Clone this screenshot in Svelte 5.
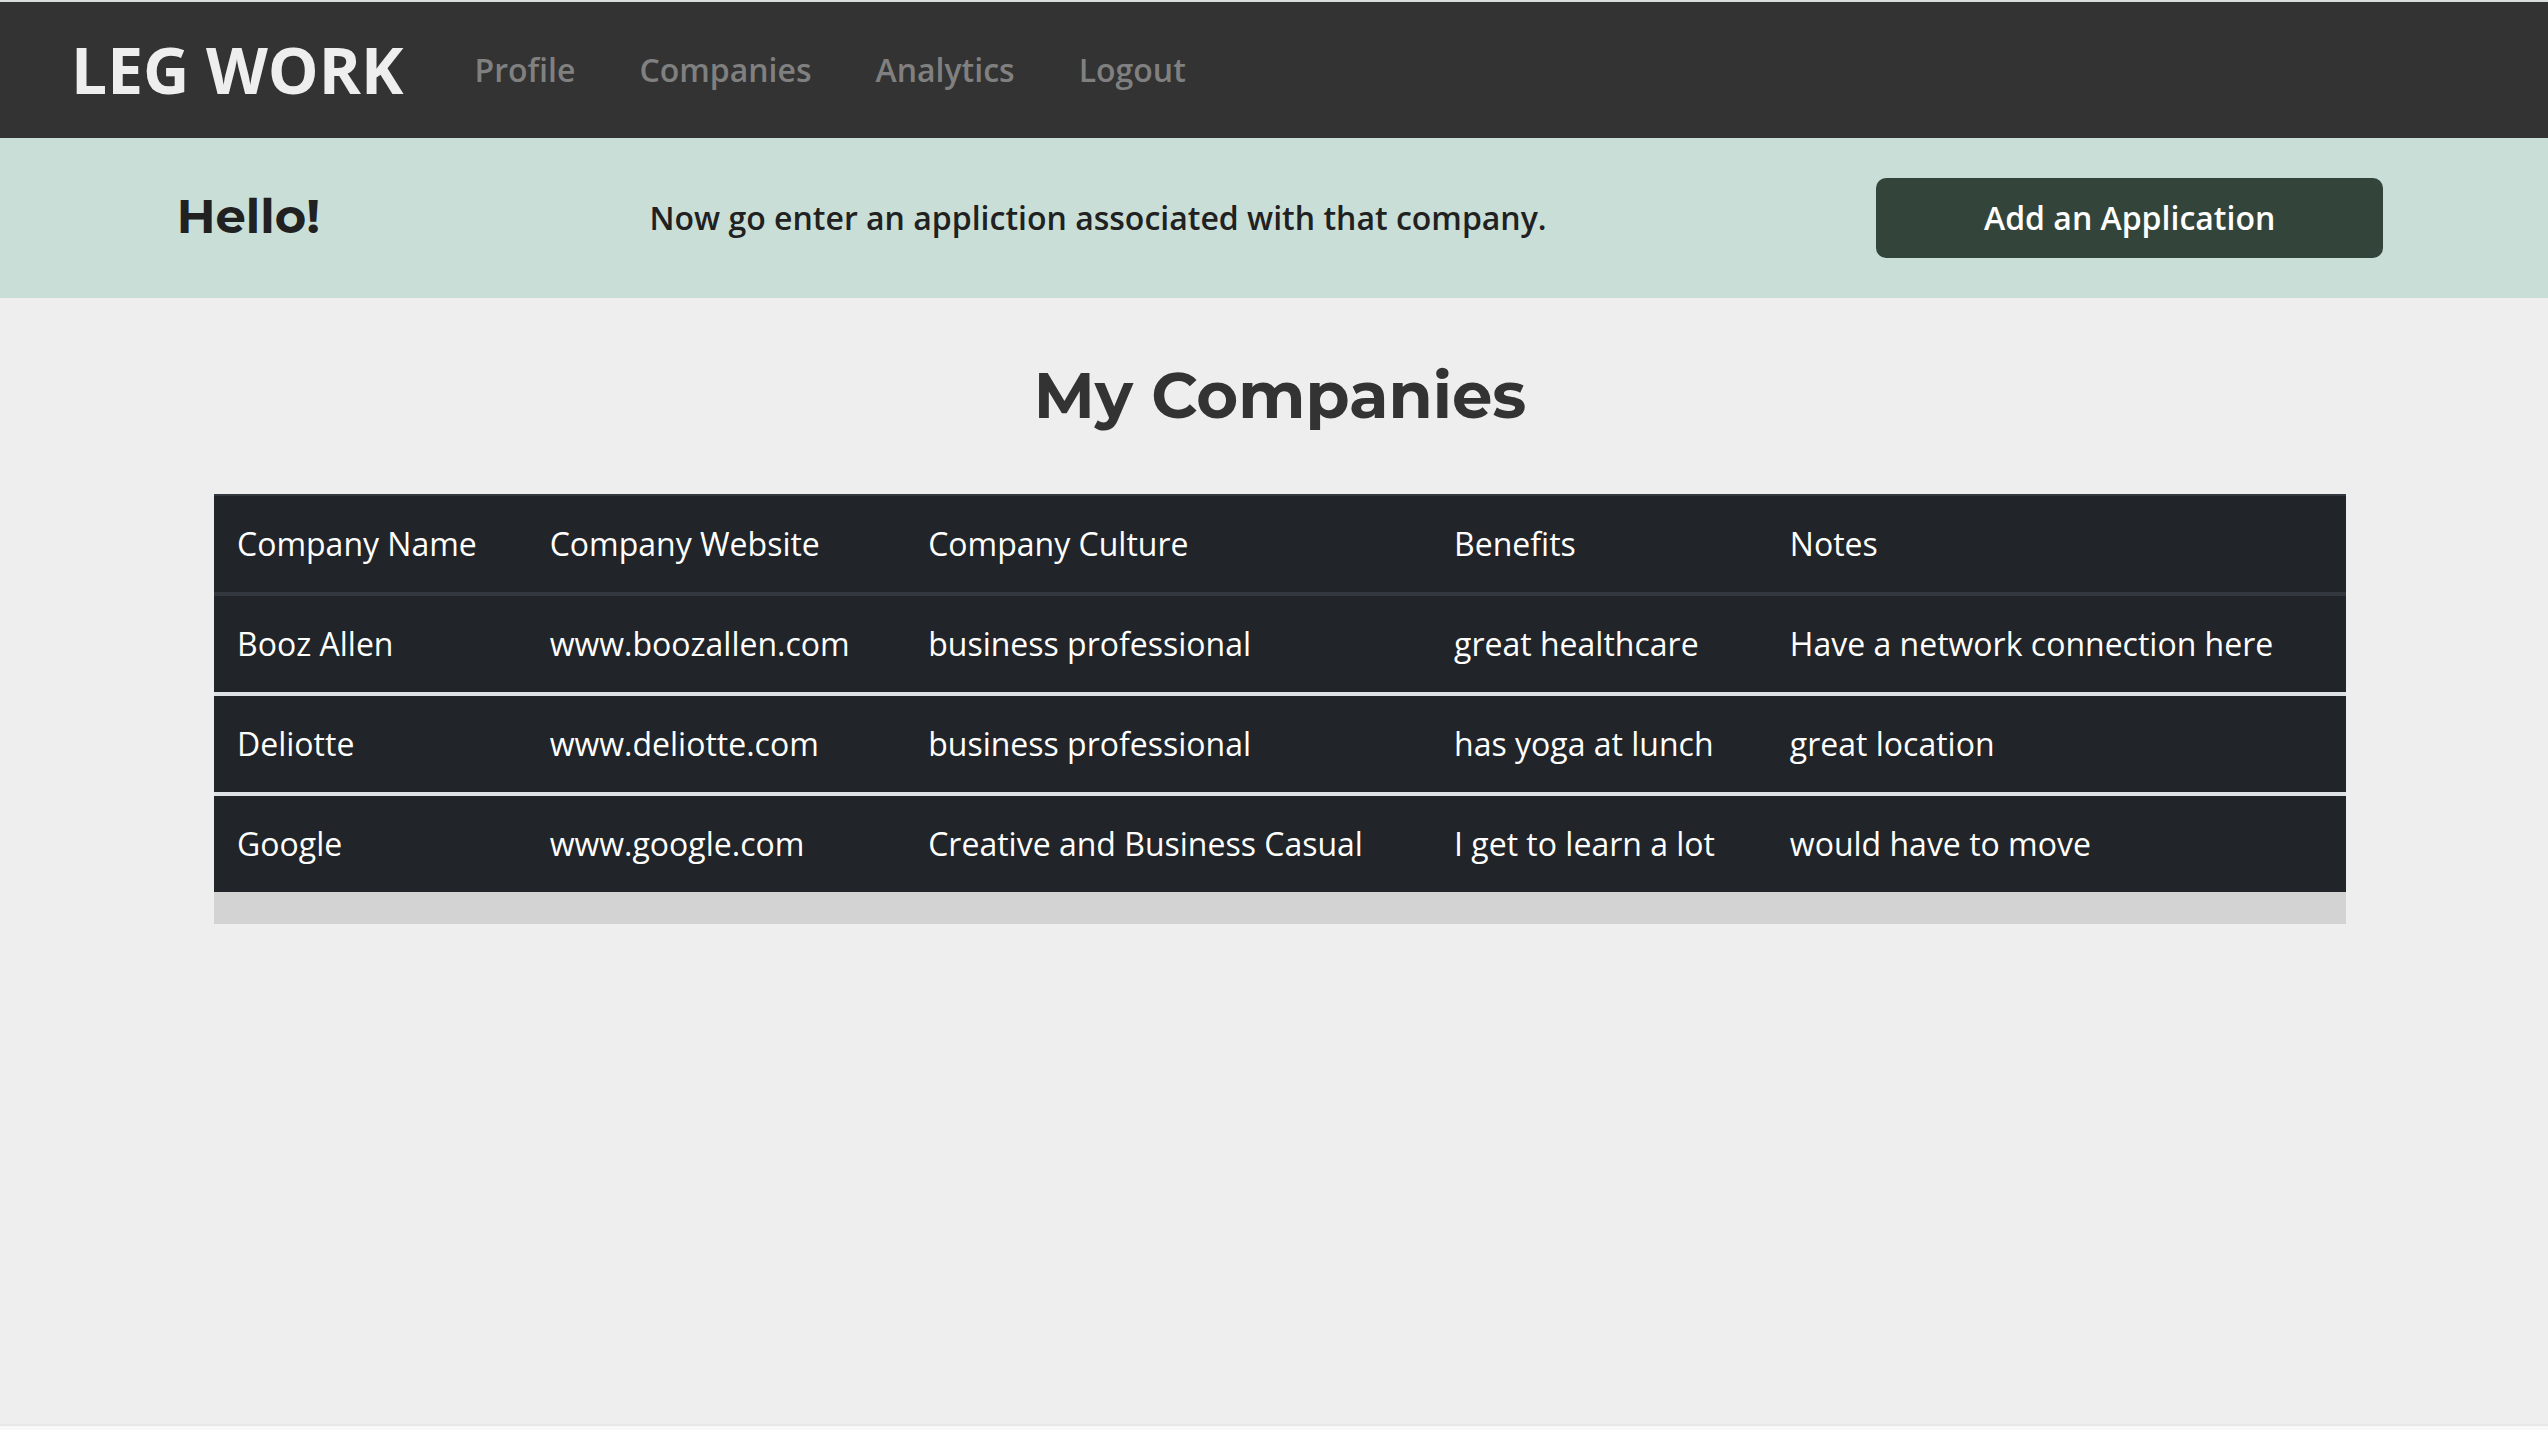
<script>
  const links = ['Profile', 'Companies', 'Analytics', 'Logout'];

  const columns = ['Company Name', 'Company Website', 'Company Culture', 'Benefits', 'Notes'];

  const companies = [
    ['Booz Allen', 'www.boozallen.com', 'business professional', 'great healthcare', 'Have a network connection here'],
    ['Deliotte', 'www.deliotte.com', 'business professional', 'has yoga at lunch', 'great location'],
    ['Google', 'www.google.com', 'Creative and Business Casual', 'I get to learn a lot', 'would have to move'],
  ];
</script>

<div class="page">
  <header class="navbar">
    <a class="brand" href="#home">LEG WORK</a>
    <nav>
      {#each links as link}
        <a href="#{link.toLowerCase()}">{link}</a>
      {/each}
    </nav>
  </header>

  <section class="banner">
    <h2>Hello!</h2>
    <p>Now go enter an appliction associated with that company.</p>
    <button type="button">Add an Application</button>
  </section>

  <main>
    <h1>My Companies</h1>
    <div class="table-wrap">
      <table>
        <thead>
          <tr>
            {#each columns as column}
              <th scope="col">{column}</th>
            {/each}
          </tr>
        </thead>
        <tbody>
          {#each companies as company}
            <tr>
              {#each company as value}
                <td>{value}</td>
              {/each}
            </tr>
          {/each}
        </tbody>
      </table>
    </div>
  </main>

  <footer></footer>
</div>

<style>
  :global(body) {
    margin: 0;
    background: #eee;
    color: #212121;
    font-family: 'Open Sans', sans-serif;
    font-size: 32px;
    line-height: 48px;
  }

  .page {
    box-sizing: border-box;
    min-height: 100vh;
    display: flex;
    flex-direction: column;
    border-top: 2px solid #dadedd;
  }

  .navbar {
    display: flex;
    align-items: center;
    padding: 20px 32px;
    background: #333;
  }

  .brand {
    padding: 0 39px;
    color: #eee;
    font-size: 64px;
    font-weight: 700;
    line-height: 96px;
    text-decoration: none;
  }

  nav {
    display: flex;
  }

  nav a {
    padding: 16px 32px;
    color: #808080;
    font-weight: 600;
    text-decoration: none;
  }

  .banner {
    display: flex;
    align-items: center;
    justify-content: space-around;
    padding: 40px 0 40px 12px;
    background: #c9ded6;
  }

  h1,
  h2 {
    margin: 0;
    font-family: Montserrat, Inter, sans-serif;
    font-weight: 700;
  }

  h2 {
    padding-bottom: 4px;
    font-size: 48px;
    line-height: 60px;
  }

  p {
    margin: 0;
    font-weight: 600;
  }

  button {
    width: 20%;
    padding: 16px;
    border: 0;
    border-radius: 10px;
    background: #33453b;
    color: #fff;
    font: inherit;
    font-weight: 600;
  }

  main {
    flex: 1;
    padding: 48px 202px 48px 214px;
  }

  h1 {
    margin-bottom: 50px;
    color: #333;
    font-size: 64px;
    line-height: 98px;
    text-align: center;
  }

  .table-wrap {
    padding-bottom: 32px;
    background: #d3d3d3;
  }

  table {
    width: 100%;
    border-collapse: separate;
    border-spacing: 0;
    background: #212529;
    color: #fff;
  }

  th,
  td {
    padding: 24px 23px;
    font-weight: 400;
    text-align: left;
  }

  th {
    border-top: 2px solid #32383e;
    border-bottom: 4px solid #32383e;
  }

  tbody tr + tr td {
    border-top: 4px solid #dee2e6;
  }

  footer {
    height: 4px;
    border-top: 2px solid #e7e7e7;
    background: #f8f8f8;
  }
</style>
